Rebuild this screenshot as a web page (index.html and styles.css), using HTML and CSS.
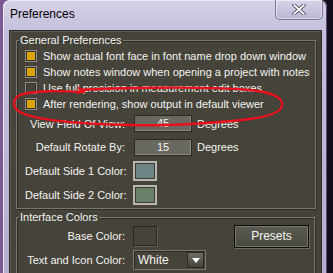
FILE: index.html
```html
<!DOCTYPE html>
<html lang="en">
<head>
    <meta charset="UTF-8">
    <title>Preferences</title>
    <link rel="stylesheet" href="styles.css">
</head>
<body>
    <div class="window">
        <div class="titlebar">
            <span class="title">Preferences</span>
            <button class="close-btn">
                <svg width="14" height="11" viewBox="0 0 14 11">
                    <path d="M2 1 L12 10 M12 1 L2 10" stroke="#3a3848" stroke-width="3.4" stroke-linecap="round"/>
                    <path d="M2 1 L12 10 M12 1 L2 10" stroke="#ffffff" stroke-width="1.8" stroke-linecap="round"/>
                </svg>
            </button>
        </div>
        <div class="panel">
            <fieldset class="group">
                <legend>General Preferences</legend>
                <div class="check-row"><span class="check on"></span>Show actual font face in font name drop down window</div>
                <div class="check-row"><span class="check on"></span>Show notes window when opening a project with notes</div>
                <div class="check-row"><span class="check"></span>Use full precision in measurement edit boxes</div>
                <div class="check-row"><span class="check on"></span>After rendering, show output in default viewer</div>

                <div class="field-row row-a">
                    <label>View Field Of View:</label>
                    <span class="num-input">45</span>
                    <span class="unit">Degrees</span>
                </div>
                <div class="field-row row-b">
                    <label>Default Rotate By:</label>
                    <span class="num-input">15</span>
                    <span class="unit">Degrees</span>
                </div>
                <div class="field-row row-c">
                    <label>Default Side 1 Color:</label>
                    <span class="swatch side1"></span>
                </div>
                <div class="field-row row-d">
                    <label>Default Side 2 Color:</label>
                    <span class="swatch side2"></span>
                </div>
            </fieldset>

            <fieldset class="group second">
                <legend>Interface Colors</legend>
                <div class="field-row row-e">
                    <label>Base Color:</label>
                    <span class="swatch base"></span>
                    <button class="presets">Presets</button>
                </div>
                <div class="field-row row-f">
                    <label>Text and Icon Color:</label>
                    <span class="dropdown">White<span class="drop-arrow"></span></span>
                </div>
            </fieldset>
        </div>
    </div>

    <svg class="annotation" width="333" height="273" viewBox="0 0 333 273">
        <path d="M80 90 C110 88, 200 86, 250 90 C272 92, 284 98, 282 106 C280 113, 265 117, 250 119 C210 124, 160 126, 130 125 C80 124, 35 120, 20 112 C12 107, 12 99, 20 95 C35 90, 60 91, 84 92 M78 93 L84 91 L79 88"
              fill="none" stroke="#e8101c" stroke-width="2.3" stroke-linecap="round" stroke-linejoin="round"/>
    </svg>
</body>
</html>
```

FILE: styles.css
```css
body {
    margin: 0;
    height: 273px;
    overflow: hidden;
    font-family: 'Liberation Sans', Arial, sans-serif;
    font-size: 11px;
    background: linear-gradient(90deg, #7a5a92 0%, #4a3060 50%, #140c1a 100%);
}
.window {
    margin-left: 3px;
    width: 324px;
    height: 273px;
    overflow: hidden;
    border-radius: 7px 7px 0 0;
    background: linear-gradient(180deg, #d6d2e6 0%, #c4bedb 12%, #b5aed0 100%);
    box-shadow: inset -1px 0 0 #5a4c72, inset 1px 1px 0 #ece8f6;
}
.titlebar {
    height: 30px;
    display: flex;
    align-items: flex-start;
    justify-content: space-between;
    padding-left: 7px;
}
.title {
    font-family: 'Liberation Sans', Arial, sans-serif;
    font-size: 12px;
    color: #000;
    margin-top: 7px;
}
.close-btn {
    width: 48px;
    height: 20px;
    margin-right: 4px;
    padding: 0;
    border: 1px solid #7e7696;
    border-top: none;
    border-radius: 0 0 5px 5px;
    background: linear-gradient(180deg, #d8d4e8, #bcb4d4);
    box-shadow: inset 0 0 0 1px rgba(255, 255, 255, 0.5);
    display: flex;
    align-items: center;
    justify-content: center;
}
.panel {
    margin: 0 5px 0 6px;
    height: 243px;
    box-sizing: border-box;
    overflow: hidden;
    background-color: #45433a;
    border: 1px solid #2c2b26;
    border-bottom: none;
    box-shadow: inset 1px 1px 0 #5c5a52;
    padding: 2px 6px 0 6px;
    color: #f4f4f0;
}
.group {
    margin: 0;
    padding: 1px 5px 2px 8px;
    border: 1px solid #7a786e;
    box-shadow: 1px 1px 0 #2e2d28, inset 1px 1px 0 #2e2d28;
}
.group legend {
    padding: 0 1px;
    margin-left: -6px;
    line-height: 14px;
}
.group.second {
    margin-top: 1px;
    padding-top: 0;
}
.check-row {
    height: 16px;
    display: flex;
    align-items: center;
    white-space: nowrap;
}
.check {
    width: 10px;
    height: 10px;
    border: 1px solid #8e8c84;
    box-shadow: inset 0 0 0 1px #34332d;
    background-color: #45433a;
    margin-right: 6px;
    flex-shrink: 0;
}
.check.on {
    background-color: #d9a300;
}
.field-row {
    display: flex;
    align-items: center;
    height: 24px;
}
.field-row label {
    width: 100px;
    text-align: right;
    margin-right: 8px;
    white-space: nowrap;
}
.row-a {
    height: 23px;
}
.row-d {
    height: 23px;
}
.num-input {
    width: 56px;
    height: 15px;
    line-height: 15px;
    text-align: center;
    background-color: #6a6961;
    border: 1px solid #2a2925;
    box-shadow: inset -1px -1px 0 #8a887f;
    margin-left: 1px;
}
.unit {
    margin-left: 5px;
}
.swatch {
    width: 20px;
    height: 16px;
    border: 2px solid #b8b8b0;
    box-shadow: inset 0 0 0 1px #3a3932;
}
.side1 {
    background-color: #6e8484;
}
.side2 {
    background-color: #6b8068;
}
.swatch.base {
    width: 22px;
    height: 18px;
    border: 1px solid #2a2925;
    box-shadow: 1px 1px 0 #5e5c54;
    background-color: #45433a;
}
.presets {
    margin-left: auto;
    width: 75px;
    height: 23px;
    padding: 0 0 1px 0;
    font-family: 'Liberation Sans', Arial, sans-serif;
    font-size: 12px;
    color: #f4f4f0;
    background: linear-gradient(180deg, #5c5b52, #4a4941);
    border: 1px solid #0c0c0a;
    box-shadow: inset 0 0 0 1px #77756c, 1px 1px 0 #6a685f;
}
.dropdown {
    width: 67px;
    height: 18px;
    display: flex;
    align-items: center;
    justify-content: space-between;
    padding-left: 4px;
    border: 1px solid #7a786e;
    box-shadow: inset 1px 1px 0 #2a2925;
    background-color: #45433a;
    font-size: 12px;
}
.drop-arrow {
    width: 17px;
    height: 16px;
    margin-right: 1px;
    position: relative;
    background: linear-gradient(180deg, #6e6d65, #44433b);
    border: 1px solid #2a2925;
    box-sizing: border-box;
}
.drop-arrow::after {
    content: "";
    position: absolute;
    left: 4px;
    top: 5px;
    border-left: 4px solid transparent;
    border-right: 4px solid transparent;
    border-top: 5px solid #ffffff;
}
.annotation {
    position: absolute;
    left: 0;
    top: 0;
    pointer-events: none;
}
```
